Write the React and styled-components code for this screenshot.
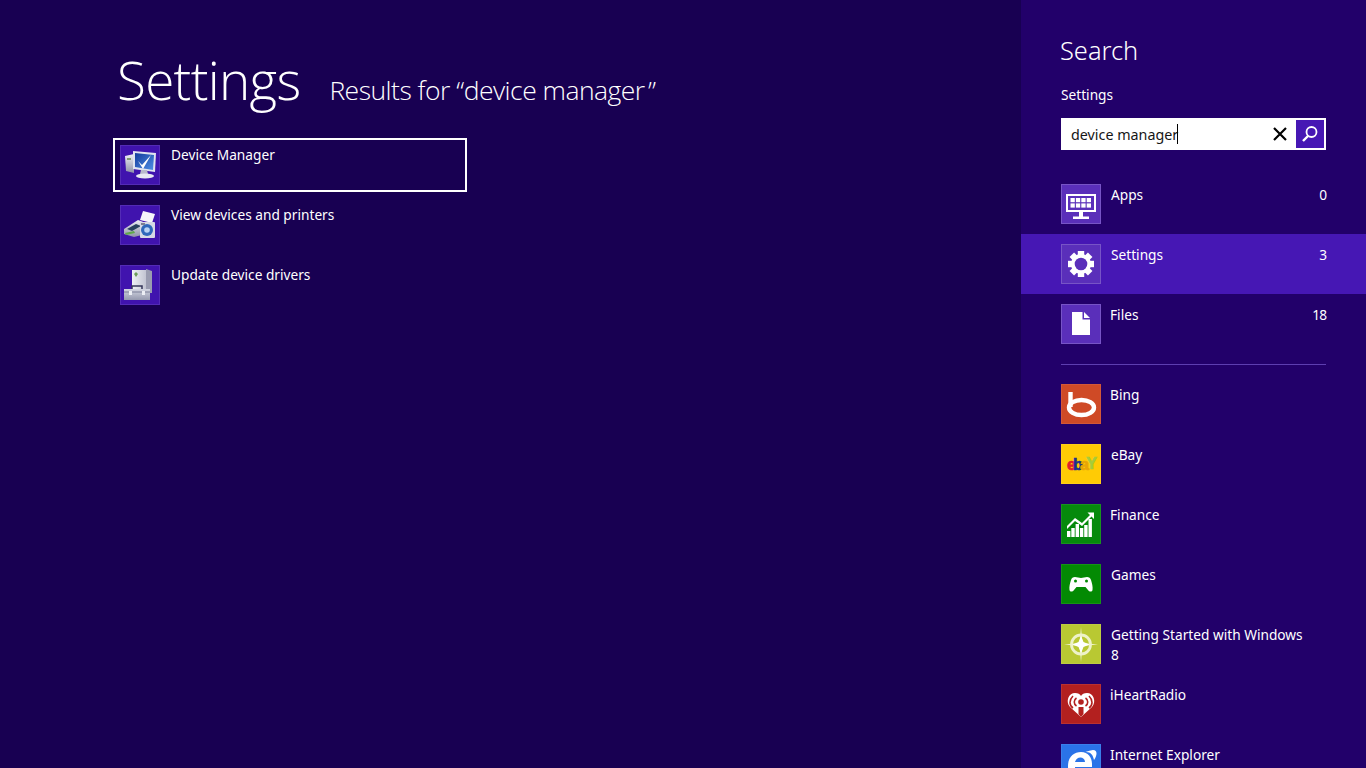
import React from "react";
import styled, { createGlobalStyle } from "styled-components";

const Global = createGlobalStyle`
  html, body { margin: 0; padding: 0; height: 768px; overflow: hidden; background: #180052; }
  #root { height: 768px; }
  * { box-sizing: border-box; }
`;

const Screen = styled.div`
  display: flex;
  width: 1366px;
  height: 768px;
  overflow: hidden;
  background: #180052;
  color: #fff;
  font-family: "Noto Sans", "Open Sans", sans-serif;
  font-size: 13.7px;
`;

const ResultsPane = styled.main`
  flex: 1;
  padding: 44px 0 0 113px;
`;

const Header = styled.header`
  display: flex;
  align-items: baseline;
  height: 94px;
  padding-left: 4px;
`;

const Title = styled.h1`
  margin: 0 29px 0 0;
  font-family: "Open Sans", sans-serif;
  font-weight: 300;
  font-size: 53px;
  line-height: 72px;
  letter-spacing: -0.7px;
`;

const Subtitle = styled.span`
  font-family: "Open Sans", sans-serif;
  font-weight: 300;
  font-size: 26.5px;
  letter-spacing: -0.52px;
`;

const QuoteTail = styled.span`
  word-spacing: -3px;
`;

const ResultList = styled.ul`
  display: flex;
  flex-direction: column;
  gap: 6px;
  width: 354px;
  margin: 0;
  padding: 0;
  list-style: none;
`;

const Result = styled.li`
  display: flex;
  height: 54px;
  padding: 5px;
  gap: 11px;
  border: 2px solid ${(p) => (p.$focused ? "#fff" : "transparent")};
`;

const Label = styled.span`
  line-height: 20px;
`;

const Tile = styled.div`
  flex: none;
  display: flex;
  align-items: center;
  justify-content: center;
  width: 40px;
  height: 40px;
  background: ${(p) => p.$bg || "#5a2fba"};
  border: 1px solid ${(p) => p.$border || "rgba(255,255,255,0.18)"};
  overflow: hidden;
`;

const Charm = styled.aside`
  flex: none;
  width: 345px;
  height: 768px;
  background: #22006a;
`;

const CharmHead = styled.div`
  padding: 32px 40px 0;
`;

const CharmTitle = styled.h2`
  margin: 0 0 0 -1px;
  font-family: "Noto Sans", sans-serif;
  font-weight: 300;
  font-size: 25.4px;
  line-height: 36px;
`;

const Scope = styled.div`
  margin-top: 17px;
  line-height: 20px;
`;

const SearchBox = styled.div`
  display: flex;
  align-items: center;
  height: 32px;
  margin-top: 13px;
  padding: 2px;
  background: #fff;
  color: #161616;
  font-size: 14.3px;
`;

const Query = styled.div`
  flex: 1;
  display: flex;
  align-items: center;
  padding-left: 8px;
`;

const Caret = styled.i`
  display: block;
  width: 1px;
  height: 20px;
  margin-left: -1px;
  background: #000;
`;

const Clear = styled.div`
  display: flex;
  width: 32px;
  justify-content: center;
`;

const Go = styled.div`
  display: flex;
  align-items: center;
  justify-content: center;
  width: 28px;
  height: 28px;
  background: #4617b4;
`;

const CategoryList = styled.div`
  margin-top: 24px;
`;

const Row = styled.div`
  display: flex;
  height: 60px;
  padding: 10px 40px;
  gap: ${(p) => p.$gap || 10}px;
  background: ${(p) => (p.$active ? "#4617b4" : "transparent")};
`;

const RowLabel = styled.span`
  max-width: 200px;
  line-height: 20px;
  margin-top: 1px;
`;

const Count = styled.span`
  margin: 1px 0 0 auto;
  line-height: 20px;
  letter-spacing: -1px;
`;

const Divider = styled.hr`
  height: 1px;
  margin: 10px 40px 9px;
  border: 0;
  background: #5d3eb0;
`;

const AppList = styled.div``;

const GlyphSvg = styled.svg`
  display: block;
  flex: none;
  ${(p) => p.$soft && "filter: blur(0.35px);"}
`;

const Glyph = ({ children, soft }) => (
  <GlyphSvg width="38" height="38" viewBox="1 1 38 38" $soft={soft}>{children}</GlyphSvg>
);

const DeviceIcon = () => (
  <Glyph soft>
    <defs>
      <linearGradient id="scr" x1="0" y1="0" x2="1" y2="1"><stop offset="0" stopColor="#123b9c" /><stop offset="1" stopColor="#4f8fe6" /></linearGradient>
      <linearGradient id="sil" x1="0" y1="0" x2="0" y2="1"><stop offset="0" stopColor="#eef0f6" /><stop offset="1" stopColor="#8f90a8" /></linearGradient>
    </defs>
    <path d="M5 11l9-2v19l-8-2z" fill="url(#sil)" />
    <rect x="7" y="13" width="4" height="2" fill="#7f9a72" />
    <path d="M13 6l23 2-1 19-22-3z" fill="#dfe3f0" />
    <path d="M15 8l19 2-1 15-18-3z" fill="url(#scr)" />
    <path d="M18 16l4 4 9-10-8 14z" fill="#fff" />
    <path d="M21 25h6l1 4h-8z" fill="#b9bbcb" />
    <ellipse cx="25" cy="31" rx="9" ry="2.600" fill="#e8eaf2" />
  </Glyph>
);

const PrinterIcon = () => (
  <Glyph soft>
    <defs>
      <linearGradient id="pr" x1="0" y1="0" x2="0" y2="1"><stop offset="0" stopColor="#eceef4" /><stop offset="1" stopColor="#8e90a6" /></linearGradient>
    </defs>
    <path d="M23 6l12 3-3 9-12-3z" fill="#f6f6fa" />
    <path d="M4 24l14-9 8 3v11l-12 3-10-3z" fill="url(#pr)" />
    <path d="M7 24l9-5 5 2-9 5z" fill="#27405f" />
    <path d="M5 28l9-2 1 2-9 2z" fill="#5fa84a" />
    <rect x="20" y="17" width="15" height="16" rx="1" fill="#d6d9e5" />
    <circle cx="27" cy="25" r="6" fill="#2f68bb" />
    <circle cx="27" cy="25" r="2.800" fill="#b7d3f5" />
    <rect x="21" y="18" width="4" height="2" fill="#7c7e92" />
  </Glyph>
);

const ToolboxIcon = () => (
  <Glyph soft>
    <defs>
      <linearGradient id="tw" x1="0" y1="0" x2="1" y2="0"><stop offset="0" stopColor="#eef0f4" /><stop offset="1" stopColor="#c2c4d2" /></linearGradient>
      <linearGradient id="bx" x1="0" y1="0" x2="0" y2="1"><stop offset="0" stopColor="#d3d6e2" /><stop offset="1" stopColor="#9498ae" /></linearGradient>
    </defs>
    <path d="M12 5h14v20H12z" fill="url(#tw)" />
    <path d="M26 4l6 2v22h-6z" fill="#9a9cb0" />
    <path d="M14 9l2-2 2 2-2 3z" fill="#6d9b5a" />
    <path d="M4 24h26v11H4z" fill="url(#bx)" />
    <path d="M12 24v-3h10v3" fill="none" stroke="#34365a" strokeWidth="1.500" />
    <path d="M4 27h26" stroke="#7b7e98" />
    <rect x="9" y="26" width="3" height="4" fill="#eceef4" />
    <rect x="22" y="26" width="3" height="4" fill="#eceef4" />
  </Glyph>
);

const AppsIcon = () => (
  <Glyph>
    <path d="M5 10h30v18H5z" fill="#fff" />
    <path d="M7 12h26v14H7z" fill="#5a2fba" />
    {[0, 1, 2, 3].flatMap((c) => [0, 1].map((r) => (
      <rect key={c + "-" + r} x={9.500 + c * 5.400} y={14 + r * 5.400} width="4.300" height="4.200" fill="#fff" />
    )))}
    <path d="M18 28h4v4.500h6V35H12v-2.500h6z" fill="#fff" />
  </Glyph>
);

const GearIcon = () => (
  <Glyph>
    <g fill="#fff">
      {[0, 45, 90, 135].map((a) => (
        <rect key={a} x="16.800" y="7" width="6.400" height="26" transform={`rotate(${a} 20 20)`} />
      ))}
      <circle cx="20" cy="20" r="10" />
      <circle cx="20" cy="20" r="6.300" fill="#5a2fba" />
    </g>
  </Glyph>
);

const FileIcon = () => (
  <Glyph>
    <g fill="#fff">
      <path d="M11 8h10.500v7.500H29V31H11z" />
      <path d="M23 8l6 6h-6z" />
    </g>
  </Glyph>
);

const SearchGlass = () => (
  <svg width="20" height="20" viewBox="0 0 20 20">
    <circle cx="11.500" cy="8" r="5" fill="none" stroke="#fff" strokeWidth="1.800" />
    <path d="M8 12L3 17" stroke="#fff" strokeWidth="2.400" />
  </svg>
);

const ClearIcon = () => (
  <svg width="16" height="16" viewBox="0 0 16 16">
    <path d="M2 2l12 12M14 2L2 14" stroke="#000" strokeWidth="2.200" />
  </svg>
);

const BingIcon = () => (
  <Glyph>
    <g fill="none" stroke="#fff" strokeWidth="4.400">
      <path d="M9.500 8v15" />
      <ellipse cx="20.500" cy="23.500" rx="12.500" ry="7.500" />
    </g>
  </Glyph>
);

const EbayText = styled.text`
  font-family: "Liberation Sans", sans-serif;
  font-size: 16px;
  font-weight: 700;
  letter-spacing: -2.800px;
`;

const EbayLetter = styled.tspan`
  fill: ${(p) => p.$c};
  stroke: ${(p) => p.$c};
  stroke-width: 0.7px;
`;

const EbayIcon = () => (
  <Glyph>
    <EbayText x="6" y="26">
      <EbayLetter $c="#e0202a">e</EbayLetter>
      <EbayLetter $c="#1c2f8f">b</EbayLetter>
      <EbayLetter $c="#e8a408">a</EbayLetter>
      <EbayLetter $c="#a6cc3a" dy="-1">Y</EbayLetter>
    </EbayText>
  </Glyph>
);

const barTops = [27, 24, 20, 24, 21, 15];

const FinanceIcon = () => (
  <Glyph>
    <g fill="#fff">
      <path d="M6 22l8-8 7 5 8-8-2.500-2.500H33V15l-2.500-2.500L21 22l-7-5-8 8z" />
      {[6, 10.300, 14.600, 18.900, 23.200, 27.500].map((x, i) => (
        <rect key={x} x={x} y={barTops[i]} width="3.400" height={33 - barTops[i]} />
      ))}
    </g>
  </Glyph>
);

const GamesIcon = () => (
  <Glyph>
    <path d="M14 13c2 0 4 1 6 1s4-1 6-1c2 0 3.500 1 4 3 1 3 2 7 1.500 10-.5 2-3 2-4.500 0l-2.500-3h-9L13 26c-1.500 2-4 2-4.500 0-.5-3 .5-7 1.500-10 .5-2 2-3 4-3z" fill="#fff" />
    <circle cx="14.500" cy="17" r="1.500" fill="#038a03" />
    <circle cx="25.500" cy="17" r="1.500" fill="#038a03" />
  </Glyph>
);

const CompassIcon = () => (
  <Glyph>
    <circle cx="20" cy="20.500" r="9.500" fill="none" stroke="#eef2c8" strokeWidth="2.800" />
    <path d="M20 3l1.500 16 15.500 1.500-15.500 1.500L20 38l-1.500-16L3 20.500 18.500 19z" fill="#eef2c8" />
    <path d="M20 12l2.500 6 6 2.500-6 2.500-2.500 6-2.500-6-6-2.500 6-2.500z" fill="#fff" />
  </Glyph>
);

const HeartIcon = () => (
  <Glyph>
    <path d="M20 33L9 23c-5-6-1-14 5-14 3 0 5 1 6 3 1-2 3-3 6-3 6 0 10 8 5 14z" fill="#fff" />
    <path d="M17.500 30v-7h5v7l-2.500 3z" fill="#b3201f" />
    <path d="M15.500 14c-3 2-3 6 0 8M24.500 14c3 2 3 6 0 8M12 12c-4 4-4 9 0 12M28 12c4 4 4 9 0 12" fill="none" stroke="#b3201f" strokeWidth="1.600" />
    <circle cx="20" cy="18" r="2.800" fill="#b3201f" />
  </Glyph>
);

const IeIcon = () => (
  <Glyph>
    <path d="M7 22c0-9 6-14 13-14 7 0 11 5 11 12v3H14c0 6 9 7 14 2h3c-2 6-7 8-12 8C12 33 7 29 7 22zM14 18h10c0-6-9-6-10 0z" fill="#fff" fillRule="evenodd" />
    <path d="M6 32c-4-3 8-24 26-26 5 0 4 6 1 10-1-5-3-8-8-8C17 9 10 22 9 31c-1 2-2 2-3 1z" fill="#fff" />
  </Glyph>
);

const results = [
  { label: "Device Manager", Icon: DeviceIcon, focused: true },
  { label: "View devices and printers", Icon: PrinterIcon },
  { label: "Update device drivers", Icon: ToolboxIcon },
];

const categories = [
  { label: "Apps", count: 0, Icon: AppsIcon },
  { label: "Settings", count: 3, Icon: GearIcon, active: true },
  { label: "Files", count: 18, Icon: FileIcon, gap: 9 },
];

const apps = [
  { label: "Bing", Icon: BingIcon, bg: "#cf4a26", gap: 9 },
  { label: "eBay", Icon: EbayIcon, bg: "#ffcb05" },
  { label: "Finance", Icon: FinanceIcon, bg: "#068a0c", gap: 9 },
  { label: "Games", Icon: GamesIcon, bg: "#038a03" },
  { label: "Getting Started with Windows 8", Icon: CompassIcon, bg: "#b9c832" },
  { label: "iHeartRadio", Icon: HeartIcon, bg: "#b3201f", gap: 9 },
  { label: "Internet Explorer", Icon: IeIcon, bg: "#2a73e8", gap: 9 },
];

export default function App() {
  return (
    <Screen>
      <Global />
      <ResultsPane>
        <Header>
          <Title>Settings</Title>
          <Subtitle>Results for “device manager<QuoteTail> ”</QuoteTail></Subtitle>
        </Header>
        <ResultList>
          {results.map(({ label, Icon, focused }) => (
            <Result key={label} $focused={focused}>
              <Tile $bg="#4013ae" $border="rgba(255,255,255,0.1)"><Icon /></Tile>
              <Label>{label}</Label>
            </Result>
          ))}
        </ResultList>
      </ResultsPane>
      <Charm>
        <CharmHead>
          <CharmTitle>Search</CharmTitle>
          <Scope>Settings</Scope>
          <SearchBox>
            <Query>device manager<Caret /></Query>
            <Clear><ClearIcon /></Clear>
            <Go><SearchGlass /></Go>
          </SearchBox>
        </CharmHead>
        <CategoryList>
          {categories.map(({ label, count, Icon, active, gap }) => (
            <Row key={label} $active={active} $gap={gap}>
              <Tile><Icon /></Tile>
              <RowLabel>{label}</RowLabel>
              <Count>{count}</Count>
            </Row>
          ))}
        </CategoryList>
        <Divider />
        <AppList>
          {apps.map(({ label, Icon, bg, gap }) => (
            <Row key={label} $gap={gap}>
              <Tile $bg={bg} $border="rgba(255,255,255,0.08)"><Icon /></Tile>
              <RowLabel>{label}</RowLabel>
            </Row>
          ))}
        </AppList>
      </Charm>
    </Screen>
  );
}
